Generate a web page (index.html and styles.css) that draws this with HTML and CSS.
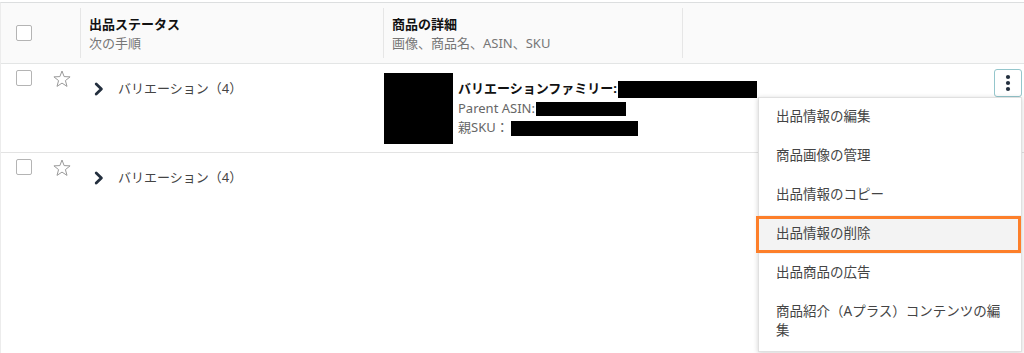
FILE: index.html
```html
<!DOCTYPE html>
<html lang="ja">
<head>
  <meta charset="utf-8">
  <title>在庫管理</title>
  <link rel="stylesheet" href="styles.css">
</head>
<body>
  <div class="listing-table">
    <!-- Header -->
    <div class="table-head">
      <div class="cell head-check"><span class="checkbox"></span></div>
      <div class="cell head-cell">
        <div class="head-title">出品ステータス</div>
        <div class="head-sub">次の手順</div>
      </div>
      <div class="cell head-cell">
        <div class="head-title">商品の詳細</div>
        <div class="head-sub">画像、商品名、ASIN、SKU</div>
      </div>
      <div class="cell head-cell"></div>
    </div>

    <!-- Row 1 -->
    <div class="table-row">
      <div class="cell row-check">
        <span class="checkbox"></span>
        <svg class="star" width="18" height="18" viewBox="0 0 18 18"><polygon points="9,1 11.12,6.59 17.08,6.87 12.42,10.61 14,16.38 9,13.1 4,16.38 5.58,10.61 0.92,6.87 6.88,6.59" fill="none" stroke="#9a9a9a" stroke-width="1" stroke-linejoin="round"/></svg>
      </div>
      <div class="cell row-status">
        <svg class="chevron" width="10" height="14" viewBox="0 0 10 14"><path d="M2.2 2 L7.4 7 L2.2 12" fill="none" stroke="#232f3e" stroke-width="2.8" stroke-linecap="round" stroke-linejoin="round"/></svg>
        <span>バリエーション（4）</span>
      </div>
      <div class="cell row-details">
        <div class="thumb"></div>
        <div class="details-text">
          <div class="family">バリエーションファミリー:<span class="redact r1"></span></div>
          <div class="meta">Parent ASIN:<span class="redact r2"></span></div>
          <div class="meta">親SKU：<span class="redact r3"></span></div>
        </div>
      </div>
      <div class="cell row-actions">
        <div class="action-wrap">
          <button class="menu-btn">
            <svg width="6" height="18" viewBox="0 0 6 18"><circle cx="3" cy="3" r="2.1" fill="#232f3e"/><circle cx="3" cy="9" r="2.1" fill="#232f3e"/><circle cx="3" cy="15" r="2.1" fill="#232f3e"/></svg>
          </button>
          <ul class="action-menu">
            <li class="menu-item">出品情報の編集</li>
            <li class="menu-item">商品画像の管理</li>
            <li class="menu-item">出品情報のコピー</li>
            <li class="menu-item selected">出品情報の削除</li>
            <li class="menu-item">出品商品の広告</li>
            <li class="menu-item">商品紹介（Aプラス）コンテンツの編集</li>
          </ul>
        </div>
      </div>
    </div>

    <!-- Row 2 -->
    <div class="table-row last-row">
      <div class="cell row-check">
        <span class="checkbox"></span>
        <svg class="star" width="18" height="18" viewBox="0 0 18 18"><polygon points="9,1 11.12,6.59 17.08,6.87 12.42,10.61 14,16.38 9,13.1 4,16.38 5.58,10.61 0.92,6.87 6.88,6.59" fill="none" stroke="#9a9a9a" stroke-width="1" stroke-linejoin="round"/></svg>
      </div>
      <div class="cell row-status">
        <svg class="chevron" width="10" height="14" viewBox="0 0 10 14"><path d="M2.2 2 L7.4 7 L2.2 12" fill="none" stroke="#232f3e" stroke-width="2.8" stroke-linecap="round" stroke-linejoin="round"/></svg>
        <span>バリエーション（4）</span>
      </div>
      <div class="cell"></div>
      <div class="cell"></div>
    </div>
  </div>
</body>
</html>
```

FILE: styles.css
```css
body {
  margin: 0;
  padding-top: 2px;
  font-family: "Noto Sans", "Noto Sans CJK JP", sans-serif;
  font-size: 13px;
  color: #444;
  background: #fff;
  overflow: hidden;
}

.listing-table {
  border-top: 1px solid #dcdedf;
  border-left: 1px solid #ececec;
}

.table-head,
.table-row {
  display: grid;
  grid-template-columns: 79px 303px 299px 1fr;
}

/* Header */
.table-head {
  height: 60px;
  background: #fafafa;
  border-bottom: 1px solid #e3e5e5;
}

.head-check {
  display: flex;
  align-items: center;
  padding-left: 15px;
}

.head-cell {
  position: relative;
  padding: 12px 9px 0;
}

.head-cell::before {
  content: "";
  position: absolute;
  left: 0;
  top: 5px;
  bottom: 5px;
  border-left: 1px solid #e6e6e6;
}

.head-title {
  font-weight: 700;
  color: #111;
  line-height: 19px;
}

.head-sub {
  color: #767676;
  line-height: 19px;
}

.checkbox {
  display: inline-block;
  flex-shrink: 0;
  width: 14px;
  height: 14px;
  border: 1px solid #b4b4b4;
  border-radius: 2px;
  background: #fff;
}

/* Rows */
.table-row {
  height: 88px;
  border-bottom: 1px solid #e3e3e3;
}

.last-row {
  height: 200px;
  border-bottom: none;
}

.row-check {
  display: flex;
  align-items: flex-start;
  padding: 6px 0 0 15px;
}

.row-check .star {
  margin-left: 21px;
}

.row-status {
  display: flex;
  align-items: center;
  align-self: start;
  padding: 15px 0 0 14px;
  line-height: 19px;
}

.chevron {
  flex-shrink: 0;
  margin-right: 14px;
}

.row-details {
  display: flex;
  align-items: flex-start;
  min-width: 0;
  padding: 9px 0 0 1px;
}

.thumb {
  flex-shrink: 0;
  width: 69px;
  height: 71px;
  background: #000;
}

.details-text {
  margin-left: 5px;
  padding-top: 6px;
  line-height: 19.5px;
  white-space: nowrap;
}

.family {
  font-weight: 700;
  color: #111;
}

.meta {
  color: #666;
}

.redact {
  display: inline-block;
  vertical-align: middle;
  background: #000;
}

.r1 { width: 139px; height: 17px; margin-left: 1px; }
.r2 { width: 90px; height: 14px; margin-left: 1px; }
.r3 { width: 127px; height: 15px; margin-left: 2px; }

/* Actions */
.row-actions {
  display: flex;
  justify-content: flex-end;
  align-items: flex-start;
  padding: 5px 2px 0 0;
}

.action-wrap {
  position: relative;
}

.menu-btn {
  display: flex;
  align-items: center;
  justify-content: center;
  width: 28px;
  height: 28px;
  padding: 0;
  background: #fff;
  border: 1px solid #94c6cc;
  border-radius: 3px;
}

.action-menu {
  position: absolute;
  top: 28px;
  right: 0;
  width: 262px;
  margin: 0;
  padding: 0;
  list-style: none;
  background: #fff;
  border: 1px solid #e0e0e0;
  box-shadow: 0 1px 5px rgba(0, 0, 0, 0.18);
  z-index: 10;
}

.menu-item {
  position: relative;
  padding: 9px 14px 11px 17px;
  line-height: 19px;
  font-size: 13.5px;
  color: #444;
}

.menu-item.selected {
  background: #f3f3f3;
}

.menu-item.selected::after {
  content: "";
  position: absolute;
  top: 1px;
  bottom: 1px;
  left: -3px;
  right: 0;
  border: 3px solid #fd7f2a;
}
```
